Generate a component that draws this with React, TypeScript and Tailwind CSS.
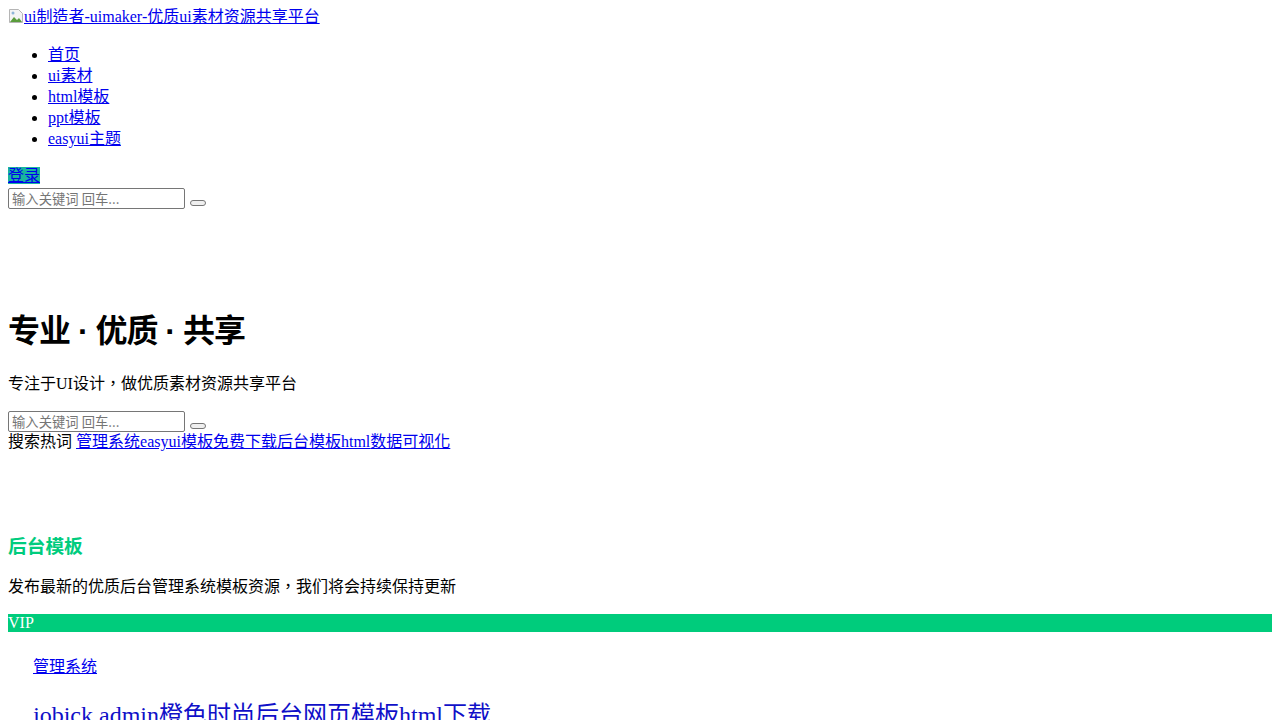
const serif = "font-['Liberation_Serif','Noto_Sans_CJK_TC',serif]";

function SearchRow() {
  return (
    <div className="flex h-[21px] items-start">
      <input
        type="text"
        placeholder="输入关键词 回车..."
        className="h-[21px] w-[177px] rounded-[2px] border border-[#767676] bg-white px-[3px] text-[13.33px] leading-[17px] font-['Noto_Sans_CJK_SC',sans-serif] placeholder:text-[#757575] outline-none"
      />
      <button
        type="button"
        className="ml-[5px] mt-[12px] h-[6px] w-[16px] rounded-[3px] border border-[#767676] bg-[#efefef]"
      />
    </div>
  );
}

function BrokenImage() {
  return (
    <svg width="16" height="16" viewBox="0 0 16 16" className="inline-block align-[-2px]">
      <path d="M1.5 1.5h9l4 4v9h-13z" fill="#f4f4f4" stroke="#b5b5b5" />
      <path d="M2 14l4-5 3 3 2-2 3 4z" fill="#5a9c3c" />
      <circle cx="5" cy="5" r="1.5" fill="#8fb5d8" />
    </svg>
  );
}

const navItems = ['首页', 'ui素材', 'html模板', 'ppt模板', 'easyui主题'];
const hotWords = ['管理系统', 'easyui模板', '免费下载', '后台模板', 'html', '数据可视化'];

export default function App() {
  return (
    <div className={`min-h-[720px] bg-white px-2 pt-[6px] text-[16px] text-black ${serif}`}>
      {/* header */}
      <div className="h-[22px] leading-[22px]">
        <a href="#" className="text-[#0000ee] underline">
          <BrokenImage />
          ui制造者-uimaker-优质ui素材资源共享平台
        </a>
      </div>
      <ul className="mt-4 list-disc pl-10">
        {navItems.map((item) => (
          <li key={item} className="h-[21px] leading-[21px]">
            <a href="#" className="text-[#0000ee] underline">
              {item}
            </a>
          </li>
        ))}
      </ul>
      <div className="mt-4 h-[23px] leading-[21px]">
        <a href="#" className="bg-[#19b59d] text-[#0000ee] underline">
          登录
        </a>
      </div>
      <SearchRow />

      {/* banner */}
      <h1 className="mt-[99px] text-[32px] leading-[46px] font-bold tracking-[-1px] font-['Liberation_Sans','Noto_Sans_CJK_SC',sans-serif]">
        专业 · 优质 · 共享
      </h1>
      <p className="mt-[19px] leading-[21px]">专注于UI设计，做优质素材资源共享平台</p>
      <div className="mt-[17px]">
        <SearchRow />
      </div>
      <div className="h-[19px] leading-[19px]">
        搜索热词{' '}
        {hotWords.map((w) => (
          <a key={w} href="#" className="text-[#0000ee] underline">
            {w}
          </a>
        ))}
      </div>

      {/* section */}
      <h3 className="mt-[80px] text-[18.72px] leading-[27px] font-bold text-[#00cc7e] font-['Noto_Sans_CJK_SC',sans-serif]">
        后台模板
      </h3>
      <p className="mt-[18px] leading-[21px]">发布最新的优质后台管理系统模板资源，我们将会持续保持更新</p>
      <div className="mt-[17px] h-[18px] bg-[#00cc7c] leading-[18px] text-white">VIP</div>
      <div className="pl-[25px]">
        <div className="mt-[24px] leading-[21px]">
          <a href="#" className="text-[#0000ee] underline">
            管理系统
          </a>
        </div>
        <div className="mt-[22px] text-[24px] leading-[32px]">
          <a href="#" className="text-[#1010c8]">
            jobick admin橙色时尚后台网页模板html下载
          </a>
        </div>
      </div>
    </div>
  );
}
